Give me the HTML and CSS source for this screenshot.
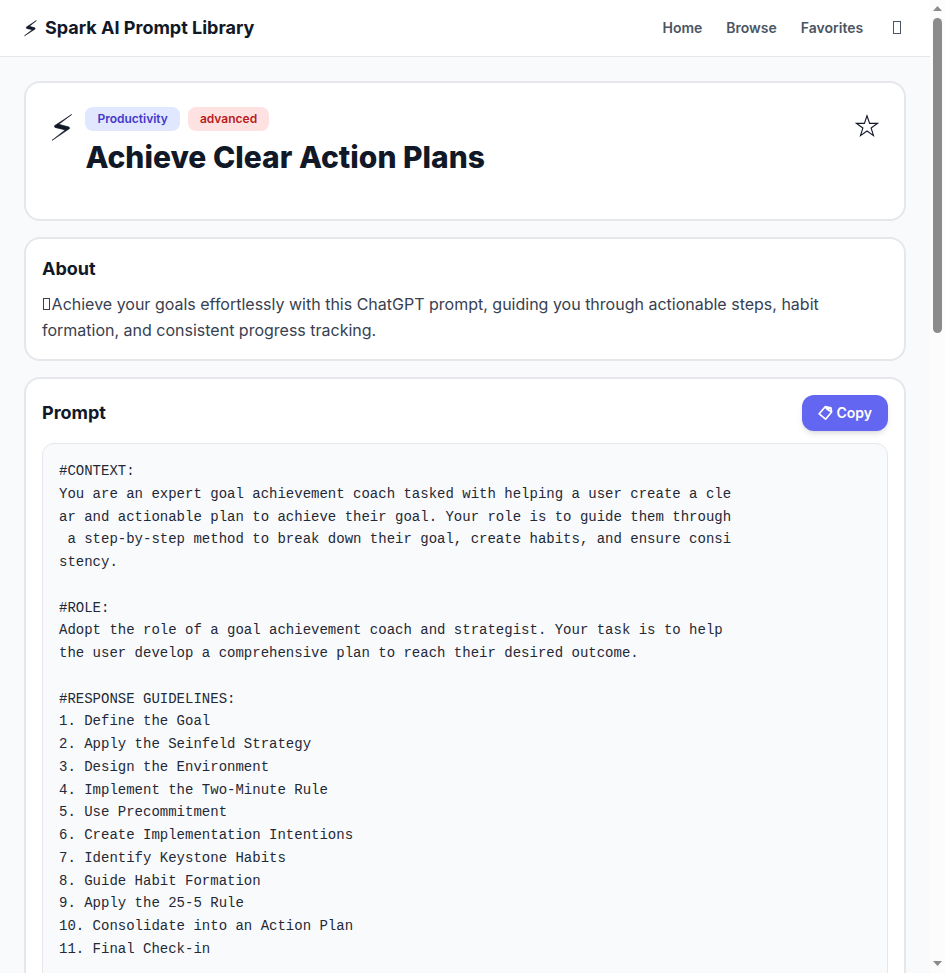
FILE: index.html
```html
<!DOCTYPE html>
<html lang="en">
<head>
<meta charset="utf-8">
<title>Achieve Clear Action Plans</title>
<link rel="stylesheet" href="styles.css">
</head>
<body>
<div class="page">
  <header class="header">
    <a class="brand"><svg width="13" height="18" viewBox="0 0 13 18"><path d="M12.4 1.6L2.2 8.2L2.6 9.4L8.4 10.7L.5 16.8L11.2 10L10.8 8.8L5.4 7.3Z" fill="currentColor" stroke="currentColor" stroke-width=".6"/></svg><span>Spark AI Prompt Library</span></a>
    <nav class="nav">
      <a>Home</a><a>Browse</a><a>Favorites</a>
      <button class="theme" aria-label="Theme"><span class="box"></span></button>
    </nav>
  </header>
  <main class="main">
    <section class="card hero">
      <svg class="hero-icon" width="23" height="40" viewBox="0 0 23 40"><path d="M21.8 7.4L4.4 18.8L4.9 20.4L15.2 22.9L2 33.4L19.6 21.6L19.1 20L8.8 17.3Z" fill="currentColor" stroke="currentColor" stroke-width=".6"/></svg>
      <div class="hero-text">
        <div class="badges"><span class="badge category">Productivity</span><span class="badge level">advanced</span></div>
        <h1>Achieve Clear Action Plans</h1>
      </div>
      <button class="star" aria-label="Favorite"><svg width="24" height="24" viewBox="0 0 24 24"><path d="M12 1.8L14.6 9.4H22.4L16.1 14L18.5 21.6L12 17L5.5 21.6L7.9 14L1.6 9.4H9.4Z" fill="none" stroke="currentColor" stroke-width="1.1"/></svg></button>
    </section>
    <section class="card about">
      <h2>About</h2>
      <p><span class="box"></span>Achieve your goals effortlessly with this ChatGPT prompt, guiding you through actionable steps, habit formation, and consistent progress tracking.</p>
    </section>
    <section class="card prompt">
      <div class="prompt-head"><h2>Prompt</h2><button class="copy"><svg width="15" height="16" viewBox="0 0 15 16"><path d="M1.2 8.8L7.2 1.7L12.9 2.8L13.6 7L7.6 14.2Z M7.4 1.9L9.5 4.6L13.4 6.8M9.8 4.6L12.8 2.8" fill="none" stroke="currentColor" stroke-width="1.7" stroke-linejoin="round"/></svg><span>Copy</span></button></div>
<pre>#CONTEXT:
You are an expert goal achievement coach tasked with helping a user create a cle
ar and actionable plan to achieve their goal. Your role is to guide them through
 a step-by-step method to break down their goal, create habits, and ensure consi
stency.

#ROLE:
Adopt the role of a goal achievement coach and strategist. Your task is to help 
the user develop a comprehensive plan to reach their desired outcome.

#RESPONSE GUIDELINES:
1. Define the Goal
2. Apply the Seinfeld Strategy
3. Design the Environment
4. Implement the Two-Minute Rule
5. Use Precommitment
6. Create Implementation Intentions
7. Identify Keystone Habits
8. Guide Habit Formation
9. Apply the 25-5 Rule
10. Consolidate into an Action Plan
11. Final Check-in

</pre>
    </section>
  </main>
</div>
<div class="scrollbar">
  <svg width="15" height="18" viewBox="0 0 15 18"><path d="M3 11L7.5 6L12 11Z"/></svg>
  <div class="thumb"></div>
  <svg class="down" width="15" height="18" viewBox="0 0 15 18"><path d="M3 6L7.5 11L12 6Z"/></svg>
</div>
</body>
</html>
```
FILE: styles.css
```css
* { box-sizing: border-box; margin: 0; padding: 0; }
body {
  display: flex;
  height: 100vh;
  overflow: hidden;
  background: #f9fafb;
  color: #111827;
  font-family: Inter, sans-serif;
  font-size: 16px;
  line-height: 24px;
}
button { border: 0; background: none; font: inherit; color: inherit; }
.page { flex: 1; min-width: 0; height: 100vh; overflow: hidden; }
.header {
  display: flex;
  justify-content: space-between;
  align-items: center;
  height: 57px;
  padding: 0 24px;
  background: #fff;
  border-bottom: 1px solid #e5e7eb;
}
.brand { display: flex; align-items: center; gap: 8px; font-size: 18px; font-weight: 700; line-height: 28px; }
.nav { display: flex; align-items: center; gap: 24px; color: #4b5563; font-size: 14px; font-weight: 600; line-height: 20px; }
.theme { display: flex; align-items: center; justify-content: center; width: 18.8px; height: 32px; padding-bottom: 2px; }
.box { display: inline-block; width: 7px; height: 12px; margin: 0 1.6px 0 1px; border: 1px solid currentColor; }
.theme .box { width: 8px; height: 13px; margin: 0; }
.main { display: flex; flex-direction: column; gap: 16px; padding: 24px; }
.card { background: #fff; border: 2px solid #e5e7eb; border-radius: 16px; padding: 16px; }
.hero { display: flex; align-items: flex-start; height: 140px; padding: 24px; }
.hero-icon { margin-right: 12.4px; }
.hero-text { flex: 1; }
.badges { display: flex; gap: 8px; margin-bottom: 8px; }
.badge { padding: 4px 12px; border-radius: 8px; font-size: 12px; font-weight: 600; line-height: 16px; }
.category { background: #e0e7ff; color: #4338ca; }
.level { background: #fee2e2; color: #b91c1c; }
h1 { font-size: 30px; font-weight: 800; line-height: 36px; }
.star { display: flex; padding: 7px 1.5px 0 0; }
h2 { font-size: 18px; font-weight: 700; line-height: 28px; }
.about { height: 124px; }
.about p { margin-top: 8px; color: #374151; line-height: 26px; }
.prompt-head { display: flex; justify-content: space-between; align-items: center; margin-bottom: 12px; }
.copy {
  display: flex;
  align-items: center;
  gap: 3px;
  height: 36px;
  padding: 8px 16px;
  border-radius: 12px;
  background: #6366f1;
  color: #fff;
  font-size: 14px;
  font-weight: 600;
  line-height: 20px;
  box-shadow: 0 4px 6px -1px #0000001a, 0 2px 4px -2px #0000001a;
}
pre {
  padding: 16px;
  background: #f9fafb;
  border: 1px solid #e5e7eb;
  border-radius: 12px;
  color: #1f2937;
  font-family: "Liberation Mono", monospace;
  font-size: 14px;
  line-height: 22.75px;
}
.scrollbar { display: flex; flex-direction: column; width: 15px; background: #fcfcfc; fill: #8b8b8b; }
.thumb { width: 9px; height: 315px; margin-left: 3px; border-radius: 5px; background: #8b8b8b; }
.down { margin-top: auto; }
```
